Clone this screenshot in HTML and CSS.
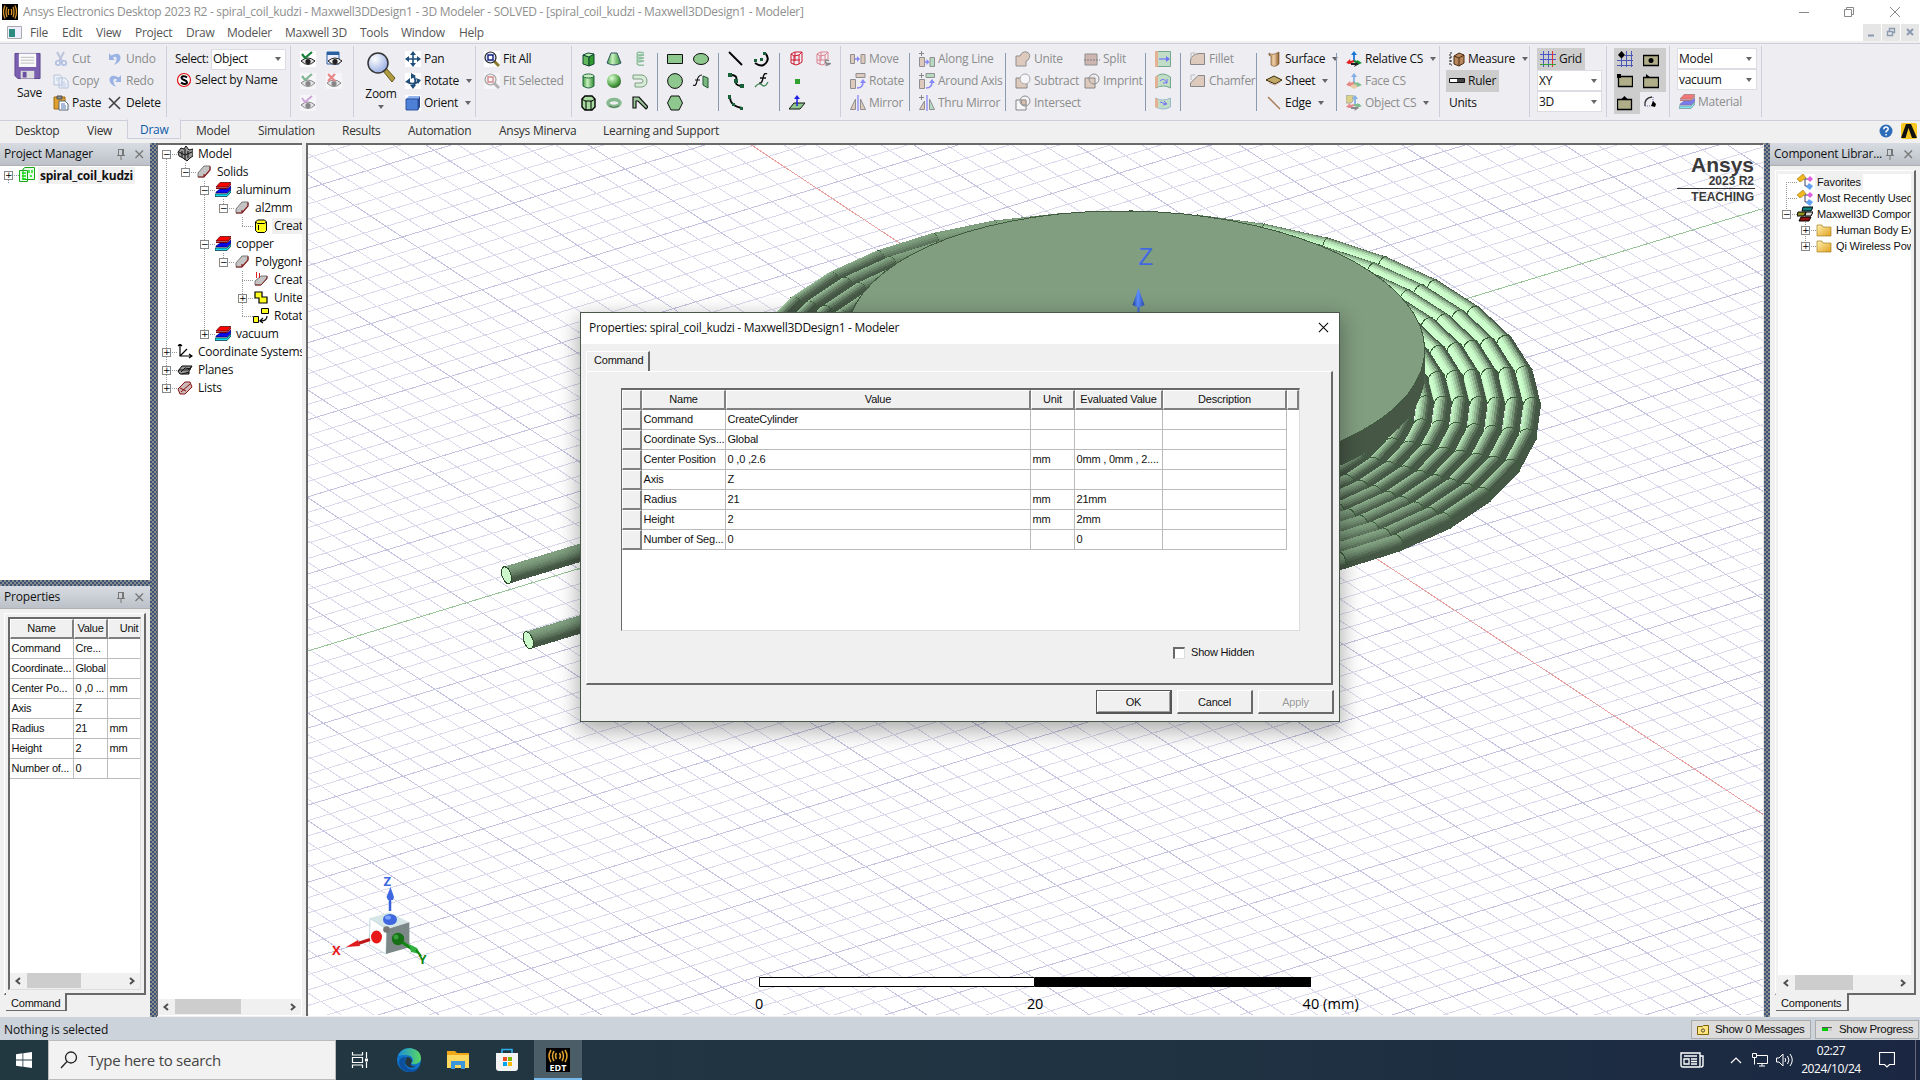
FILE: index.html
```html
<!DOCTYPE html>
<html lang="en">
<head>
<meta charset="utf-8">
<title>Ansys Electronics Desktop 2023 R2</title>
<link rel="stylesheet" href="styles.css">
</head>
<body>
<svg class="defs" width="0" height="0">
<defs>
<linearGradient id="gg" x1="0" x2="1"><stop offset="0" stop-color="#3c9c3c"/><stop offset=".4" stop-color="#c8f0c0"/><stop offset="1" stop-color="#2d8a2d"/></linearGradient>
<radialGradient id="gs" cx=".35" cy=".3" r=".8"><stop offset="0" stop-color="#e0ffd8"/><stop offset=".6" stop-color="#5aac50"/><stop offset="1" stop-color="#1c501c"/></radialGradient>
<radialGradient id="glens" cx=".35" cy=".3" r=".8"><stop offset="0" stop-color="#fff"/><stop offset="1" stop-color="#8fa6e0"/></radialGradient>
<linearGradient id="fold" x1="0" y1="0" x2="1" y2="1"><stop offset="0" stop-color="#fff3b0"/><stop offset="1" stop-color="#e0a020"/></linearGradient>
<linearGradient id="edge1" x1="0" x2="1"><stop offset="0" stop-color="#1b8fd8"/><stop offset="1" stop-color="#5ad860"/></linearGradient>
<linearGradient id="cone" x1="0" x2="1"><stop offset="0" stop-color="#1e3f9c"/><stop offset=".45" stop-color="#5f90ff"/><stop offset="1" stop-color="#2a4cae"/></linearGradient>
<linearGradient id="sk" x1="0" x2="1"><stop offset="0" stop-color="#b08050"/><stop offset=".5" stop-color="#f0d0a8"/><stop offset="1" stop-color="#906030"/></linearGradient>
</defs>
<symbol id="i-cut" viewBox="0 0 16 16"><path d="M4 1l5 9M11 1L6 10" stroke="#8a9cc4" stroke-width="2" fill="none"/><circle cx="5" cy="12" r="2.2" fill="none" stroke="#6f8fd0" stroke-width="1.6"/><circle cx="11" cy="12" r="2.2" fill="none" stroke="#6f8fd0" stroke-width="1.6"/></symbol>
<symbol id="i-copy" viewBox="0 0 16 16"><path d="M1 2h6l2 2v8H1zM6 5h6l3 3v7H6z" fill="#eef4ff" stroke="#7f9cc8"/><path d="M3 5h3M3 7h2M8 9h4M8 11h5M8 13h5" stroke="#8fb0e0"/></symbol>
<symbol id="i-paste" viewBox="0 0 16 16"><path d="M1 2h11v12H1z" fill="#e0a030" stroke="#a06c10"/><path d="M4 1h5v3H4z" fill="#888" stroke="#555"/><path d="M6 6h6l3 3v6H6z" fill="#fff" stroke="#567"/><path d="M8 9h4M8 11h5M8 13h5" stroke="#5070b0"/></symbol>
<symbol id="i-undo" viewBox="0 0 16 16"><path d="M2 2v7h6L5.800 6.800Q10 4 9.500 8.500 9.500 11 7 14 14 11 13.500 6 12 .5 4.200 4.500z" fill="#4a78d8"/></symbol>
<symbol id="i-redo" viewBox="0 0 16 16"><path d="M14 2v7H8l2.200-2.200Q6 4 6.500 8.500 6.500 11 9 14 2 11 2.500 6 4 .5 11.800 4.500z" fill="#4a78d8"/></symbol>
<symbol id="i-del" viewBox="0 0 16 16"><path d="M2 3l11 11M13 2L2 13" stroke="#444" stroke-width="1.700"/></symbol>
<symbol id="i-save" viewBox="0 0 28 28"><path d="M1 1h26v26H4l-3-3z" fill="#7a5fb0" stroke="#5c4590"/><path d="M5 1h18v14H5z" fill="#fafafa"/><path d="M7 5h14M7 8h14M7 11h14" stroke="#bbb"/><path d="M7 19h14v8H7z" fill="#ddd"/><path d="M9 20h4v6H9z" fill="#6a50a0"/></symbol>
<symbol id="i-s" viewBox="0 0 16 16"><circle cx="8" cy="8" r="6.500" fill="#fff" stroke="#e01010" stroke-width="1.200"/><path d="M11 5.500C9 3.500 5.500 4 5.500 6S11 8 11 10.200 7 12.500 5 10.500" fill="none" stroke="#000" stroke-width="2"/></symbol>
<symbol id="i-eye" viewBox="0 0 16 16"><rect width="16" height="16" fill="#fff"/><path d="M1 10q7-6 14 0-7 7-14 0z" fill="#ddd" stroke="#222"/><circle cx="8" cy="10.500" r="2.600" fill="#222"/><path d="M2 3l3 4 7-6" stroke="#15803a" stroke-width="2.200" fill="none"/></symbol>
<symbol id="i-eyew" viewBox="0 0 16 16"><path d="M1 1h12v12H1z" fill="#eef" stroke="#2860a0"/><path d="M1 1h12v3H1z" fill="#2860a0"/><path d="M2 10q7-6 14 0-7 7-14 0z" fill="#eee" stroke="#222"/><circle cx="9" cy="10.500" r="2.600" fill="#222"/></symbol>
<symbol id="i-eyex" viewBox="0 0 16 16"><rect width="16" height="16" fill="#fff"/><path d="M1 10q7-6 14 0-7 7-14 0z" fill="#ddd" stroke="#222"/><circle cx="8" cy="10.500" r="2.600" fill="#222"/><path d="M2 1l7 7M9 1L2 8" stroke="#e02020" stroke-width="2.200"/></symbol>
<symbol id="i-eyep" viewBox="0 0 16 16"><rect width="16" height="16" fill="#fff"/><path d="M1 10q7-6 14 0-7 7-14 0z" fill="#ddd" stroke="#222"/><circle cx="8" cy="10.500" r="2.600" fill="#222"/><path d="M2 3l3 4 7-6" stroke="#b060c0" stroke-width="2" fill="none"/></symbol>
<symbol id="i-zoom" viewBox="0 0 30 31"><path d="M17 19l3-3 9 10-3 4z" fill="#b09a40" stroke="#665a20"/><circle cx="12" cy="11" r="10" fill="url(#glens)" stroke="#333" stroke-width="1.500"/></symbol>
<symbol id="i-pan" viewBox="0 0 16 16"><rect width="16" height="16" fill="#fff"/><path d="M8 2v12M2 8h12" stroke="#1f4e79" stroke-width="1.600"/><path d="M8 0l3 4H5zM8 16l3-4H5zM0 8l4-3v6zM16 8l-4-3v6z" fill="#1f4e79"/></symbol>
<symbol id="i-rot" viewBox="0 0 16 16"><rect width="16" height="16" fill="#fff"/><path d="M8 3q4 3 1 10M3 9q5 4 11-1" fill="none" stroke="#1f4e79" stroke-width="1.800"/><path d="M6 0l5 3-5 3zM0 9l5-4v6zM16 7l-5-2 2 6zM8 16l-3-4h6z" fill="#1f4e79"/></symbol>
<symbol id="i-cube" viewBox="0 0 16 16"><rect width="16" height="16" fill="#fff"/><path d="M1 4l3-3h11l-2 3z" fill="#8fb4f0"/><path d="M13 4l2-3v11l-2 3z" fill="#23488c"/><path d="M1 4h12v11H1z" fill="#4f80d8" stroke="#2a4c98"/></symbol>
<symbol id="i-fit" viewBox="0 0 16 16"><rect width="16" height="16" fill="#fff"/><path d="M10 10l5 5" stroke="#8a7a30" stroke-width="3"/><circle cx="6.500" cy="6.500" r="5.500" fill="#e0e6fa" stroke="#222" stroke-width="1.200"/><path d="M4 4h5v5H4z" fill="#fff" stroke="#102080" stroke-width="1.400"/></symbol>
<symbol id="i-fits" viewBox="0 0 16 16"><rect width="16" height="16" fill="#fff"/><path d="M10 10l5 5" stroke="#777" stroke-width="3"/><circle cx="6.500" cy="6.500" r="5.500" fill="#eee" stroke="#555" stroke-width="1.200"/><path d="M4 4h5v5H4z" fill="#fff" stroke="#c03030" stroke-width="1.400"/></symbol>
<symbol id="i-box" viewBox="0 0 16 16"><path d="M2 4v9l6 2V6z" fill="#63b85c" stroke="#143"/><path d="M8 6v9l5-2V3z" fill="#2f9a2f" stroke="#143"/><path d="M2 4l5-2 6 1-5 3z" fill="#b8eeb0" stroke="#143"/></symbol>
<symbol id="i-frus" viewBox="0 0 16 16"><path d="M5 2h6l4 10q-7 4-14 0z" fill="url(#gg)" stroke="#356"/></symbol>
<symbol id="i-helix" viewBox="0 0 16 16"><path d="M12 2q-7-2-7 1t7 1q-7-1-7 2t7 1q-7-1-7 2t7 1q-7-1-7 2t7 2" fill="none" stroke="#8fc0a0" stroke-width="1.500"/></symbol>
<symbol id="i-cyl" viewBox="0 0 16 16"><path d="M2 3v10q6 4 11 0V3" fill="url(#gg)" stroke="#264"/><ellipse cx="7.500" cy="3" rx="5.500" ry="2" fill="#c8eec0" stroke="#264"/></symbol>
<symbol id="i-sph" viewBox="0 0 16 16"><circle cx="8" cy="8" r="7" fill="url(#gs)"/></symbol>
<symbol id="i-spiral" viewBox="0 0 16 16"><path d="M1 2h9q5 1 5 6t-5 6H3v-4h6q2 0 2-2T9 6H1z" fill="#d8ead8" stroke="#7aa080"/></symbol>
<symbol id="i-prism" viewBox="0 0 16 16"><path d="M1 4l3-3h7l3 3v8l-3 3H4l-3-3z" fill="#a8dca0" stroke="#000" stroke-width="1.400"/><path d="M1 4l3 2h7l3-2M5 6v9M10 6v9" stroke="#000" fill="none"/></symbol>
<symbol id="i-torus" viewBox="0 0 16 16"><ellipse cx="8" cy="8" rx="6" ry="3.500" fill="none" stroke="#88b890" stroke-width="3.500"/><path d="M3 11q5 3 10 0" stroke="#4a7a50" fill="none"/></symbol>
<symbol id="i-bend" viewBox="0 0 16 16"><path d="M1 13V2h6l9 10-2 2-8-8H4v7z" fill="#9cc89c" stroke="#111" stroke-width="1.200"/></symbol>
<symbol id="i-rect" viewBox="0 0 16 16"><path d="M.500 3.500h15v9H.500z" fill="#8fc88f" stroke="#111"/></symbol>
<symbol id="i-ell" viewBox="0 0 16 16"><ellipse cx="8" cy="8" rx="7.500" ry="5.500" fill="#8fc88f" stroke="#111"/></symbol>
<symbol id="i-circ" viewBox="0 0 16 16"><circle cx="8" cy="8" r="7.400" fill="#8fc88f" stroke="#111"/></symbol>
<symbol id="i-hex" viewBox="0 0 16 16"><path d="M4 1h8l3.500 7-3.500 7H4L.500 8z" fill="#8fc88f" stroke="#111"/></symbol>
<symbol id="i-fsurf" viewBox="0 0 16 16"><path d="M10 3l5 2v10l-5-3z" fill="#7ab880" stroke="#253"/><path d="M0 12q3 2 4-4t5-6M2 7h5" fill="none" stroke="#111" stroke-width="1.200"/></symbol>
<symbol id="i-line" viewBox="0 0 16 16"><path d="M1 1l13 13" stroke="#000" stroke-width="1.800"/></symbol>
<symbol id="i-arc" viewBox="0 0 16 16"><path d="M11 2q5 5 1 10t-11 0" fill="none" stroke="#000" stroke-width="2"/><path d="M9 1h3v3H9zM6 7h3v3H6zM0 8h3v3H0z" fill="#186038"/></symbol>
<symbol id="i-spl" viewBox="0 0 16 16"><path d="M2 2q8 0 6 5t5 6" fill="none" stroke="#000" stroke-width="1.800"/><path d="M0 0h4v4H0zM6 6h4v4H6zM12 11h4v4h-4z" fill="#186038"/></symbol>
<symbol id="i-feq" viewBox="0 0 16 16"><path d="M5 10q3 1 4-5t4-4M6 5h6" fill="none" stroke="#111" stroke-width="1.500"/><path d="M1 14q4-5 7-2t6-3" fill="none" stroke="#408858" stroke-width="1.300"/></symbol>
<symbol id="i-arc3" viewBox="0 0 16 16"><path d="M2 2q0 9 12 11" fill="none" stroke="#000" stroke-width="1.800"/><path d="M0 0h3v4H0zM4 8h3v3H4zM12 12h3v3h-3z" fill="#186038"/></symbol>
<symbol id="i-rbox" viewBox="0 0 16 16"><path d="M2 3l4-2h7l-3 3v9l-3 1-5-2zM10 4L5 5 2 3M5 5v9M13 1v10l-3 2M2 9h9M6 1v9" fill="none" stroke="#d01830"/></symbol>
<symbol id="i-rboxs" viewBox="0 0 16 16"><path d="M2 3l4-2h7l-3 3v9l-3 1-5-2zM10 4L5 5 2 3M5 5v9M13 1v7M2 9h8M6 1v9" fill="none" stroke="#d01830"/><path d="M14 9.500Q10.500 8 10.500 10.500T14 12.500 10.500 14.500" fill="none" stroke="#222" stroke-width="1.500"/></symbol>
<symbol id="i-pt" viewBox="0 0 16 16"><path d="M6 6h5v5H6z" fill="#30a030"/></symbol>
<symbol id="i-plane" viewBox="0 0 16 16"><path d="M0 14l5-6h11l-5 6z" fill="#8fc88f" stroke="#111"/><path d="M8 11V3" stroke="#2020e0" stroke-width="1.500"/><path d="M8 0l3 4H5z" fill="#2020e0"/></symbol>
<symbol id="i-move" viewBox="0 0 16 16"><path d="M.500 3.500h4v9h-4zM11 3.500h4v9h-4z" fill="#d0a888" stroke="#333"/><path d="M5 8h3" stroke="#22f" stroke-width="1.500"/><path d="M7 5l3 3-3 3z" fill="#22f"/></symbol>
<symbol id="i-mrot" viewBox="0 0 16 16"><path d="M.500 6.500h5v9h-5zM6 .500h9v4H6z" fill="#d0a888" stroke="#333"/><path d="M7 15q6 0 6-6" stroke="#22f" fill="none" stroke-width="1.500"/><path d="M10 10l3-4 3 4z" fill="#22f"/></symbol>
<symbol id="i-mir" viewBox="0 0 16 16"><path d="M5.500 4v10.500h-5zM10.500 4v10.500h5z" fill="#d0a888" stroke="#333"/><path d="M8 0v16" stroke="#22f" stroke-width="1.300"/></symbol>
<symbol id="i-dmove" viewBox="0 0 16 16"><path d="M.500 6.500h5v9h-5z" fill="#d0a888" stroke="#333"/><path d="M11 6.500h4.500v9H11z" fill="#80c890" stroke="#333"/><path d="M6 11h3" stroke="#22f" stroke-width="1.500"/><path d="M7.500 8l3 3-3 3z" fill="#22f"/><path d="M0 2.500h5M2.500 0v5" stroke="#222"/></symbol>
<symbol id="i-drot" viewBox="0 0 16 16"><path d="M.500 6.500h5v9h-5z" fill="#d0a888" stroke="#333"/><path d="M7 .500h8.500v4H7z" fill="#80c890" stroke="#333"/><path d="M7 15q6 0 6-6" stroke="#22f" fill="none" stroke-width="1.500"/><path d="M10 10l3-4 3 4z" fill="#22f"/><path d="M0 2.500h5M2.500 0v5" stroke="#222"/></symbol>
<symbol id="i-dmir" viewBox="0 0 16 16"><path d="M5.500 6v8.500h-5z" fill="#d0a888" stroke="#333"/><path d="M10.500 4v10.500h5z" fill="#80c890" stroke="#333"/><path d="M8 0v16" stroke="#22f" stroke-width="1.300"/><path d="M0 2.500h5M2.500 0v5" stroke="#222"/></symbol>
<symbol id="i-uni" viewBox="0 0 16 16"><path d="M1 5h4q2-5 7-4 5 3 1 8l-2 1v5H1z" fill="#d0a888" stroke="#333"/></symbol>
<symbol id="i-sub" viewBox="0 0 16 16"><path d="M1 5h11v10H1z" fill="#d0a888" stroke="#222"/><circle cx="10" cy="6" r="5" fill="#fff" stroke="#666"/></symbol>
<symbol id="i-int" viewBox="0 0 16 16"><path d="M1 5h10v10H1z" fill="#fff" stroke="#222"/><circle cx="10" cy="6" r="5" fill="#fff" fill-opacity=".5" stroke="#333"/><path d="M6 5h5v5H7z" fill="#d09060" stroke="#333"/></symbol>
<symbol id="i-split" viewBox="0 0 16 16"><path d="M1 3h12v11H1z" fill="#b08070" stroke="#333"/><path d="M0 9h16" stroke="#111" stroke-dasharray="2 1"/></symbol>
<symbol id="i-imp" viewBox="0 0 16 16"><path d="M1 5h10v10H1z" fill="#d0a888" stroke="#222"/><circle cx="10" cy="6" r="5" fill="none" stroke="#333"/></symbol>
<symbol id="i-sw1" viewBox="0 0 16 16"><path d="M.500.500h15v15H.500z" fill="#a4d2a8" stroke="#207a50"/><path d="M0 0h3v16H0z" fill="#e08a58"/><path d="M4 8h8" stroke="#22f" stroke-width="1.200"/><path d="M11 5l4 3-4 3z" fill="#22f"/></symbol>
<symbol id="i-sw2" viewBox="0 0 16 16"><path d="M.500 4q7-6 15 0v11q-7-4-15 0z" fill="#a4d2a8" stroke="#207a50"/><path d="M0 4l3-2v12l-3 1z" fill="#e08a58"/><path d="M5 8q4-4 7 2M12 6v4H8" stroke="#22f" fill="none"/></symbol>
<symbol id="i-sw3" viewBox="0 0 16 16"><path d="M.500 3q7 4 15 0v9q-7 4-15 0z" fill="#a4d2a8" stroke="#6098c0"/><path d="M0 3l3 1v9l-3-1z" fill="#e08a58"/><path d="M5 7l6 2M9 6l3 3-4 1" stroke="#22f" fill="none"/></symbol>
<symbol id="i-fil" viewBox="0 0 16 16"><path d="M.500 13.500V9Q2 3 9 2.500h5.500v11z" fill="#d0a888" stroke="#222"/><path d="M1 2h4M1 2v5" stroke="#888"/></symbol>
<symbol id="i-cha" viewBox="0 0 16 16"><path d="M.500 13.500V10L8 2.500h6.500v11z" fill="#d0a888" stroke="#222"/><path d="M1 2h4M1 2v5" stroke="#888"/></symbol>
<symbol id="i-surf" viewBox="0 0 16 16"><path d="M3 2q3 3 10-1v12q-4 4-8 1V5q-3 0-2-3z" fill="url(#sk)" stroke="#704820" stroke-width=".6"/></symbol>
<symbol id="i-sheet" viewBox="0 0 16 16"><path d="M0 7l8-4 8 4-7 4z" fill="#c0a868" stroke="#3a2800"/><path d="M3 10l6 2 5-3" stroke="#caa" fill="none"/></symbol>
<symbol id="i-edg" viewBox="0 0 16 16"><path d="M2 2l12 12" stroke="#a87850" stroke-width="1.300"/></symbol>
<symbol id="i-cs" viewBox="0 0 16 16"><path d="M8 2v8" stroke="#1874d8" stroke-width="1.800"/><path d="M8 0l3 4H5z" fill="#1874d8"/><path d="M8 10l-6 2" stroke="#e02020" stroke-width="2"/><path d="M0 12l4-4 1 5z" fill="#e02020"/><path d="M8 10l6 2" stroke="#109030" stroke-width="2"/><path d="M16 12l-5-3v5z" fill="#109030"/><path d="M5 12h5l-2-2 5 3-5 3 1-2H5z" fill="#222"/></symbol>
<symbol id="i-fcs" viewBox="0 0 16 16"><path d="M1 12l6-4 8 4-7 4z" fill="#e8a860"/><path d="M8 2v8" stroke="#1874d8" stroke-width="1.800"/><path d="M8 0l3 4H5z" fill="#1874d8"/><path d="M8 10l-6 2" stroke="#e02020" stroke-width="2"/><path d="M0 12l4-4 1 5z" fill="#e02020"/><path d="M8 10l6 2" stroke="#109030" stroke-width="2"/><path d="M16 12l-5-3v5z" fill="#109030"/></symbol>
<symbol id="i-ocs" viewBox="0 0 16 16"><path d="M0 1l3-1h4v6L5 8H0z" fill="#c8b820" stroke="#665"/><path d="M9 2v8" stroke="#1874d8" stroke-width="1.800"/><path d="M9 0l3 4H6z" fill="#1874d8"/><path d="M8 10l-6 2" stroke="#e02020" stroke-width="2"/><path d="M0 12l4-4 1 5z" fill="#e02020"/><path d="M8 10l6 0" stroke="#109030" stroke-width="2"/><path d="M16 11l-5-3v5z" fill="#109030"/><path d="M5 12h5l-2-2 5 3-5 3 1-2H5z" fill="#222"/></symbol>
<symbol id="i-meas" viewBox="0 0 16 16"><path d="M3 2H1v12h2M1 6h2M1 10h2" stroke="#222" fill="none" stroke-dasharray="2 1"/><path d="M5 5l5-3 5 2v8l-5 3-5-2z" fill="#b8865c" stroke="#4a2c10"/><path d="M5 5l5 2 5-3M10 7v8" stroke="#4a2c10" fill="none"/></symbol>
<symbol id="i-rul" viewBox="0 0 16 16"><path d="M.500 5.500h15v4H.500z" fill="#fff" stroke="#111"/><path d="M8 6h7v3H8z" fill="#444"/></symbol>
<symbol id="i-grid" viewBox="0 0 16 16"><path d="M3.500 0v16M8.500 0v16M0 3.500h16M0 8.500h16" stroke="#4a58c8"/><path d="M12.500 0v16" stroke="#e03030"/><path d="M0 13.500h16" stroke="#30a030"/></symbol>
<symbol id="i-sng" viewBox="0 0 16 16"><path d="M4.500 6v10M9.500 0v16M14.500 0v16M0 9.500h16M0 14.500h16M8 4.500h8" stroke="#4a58b8"/><path d="M4.500 0L8 4 4.500 7.500 1 4z"/></symbol>
<symbol id="i-sn1" viewBox="0 0 16 16"><path d="M.500 4.500h15v10H.500z" fill="#b0ae88" stroke="#000" stroke-width="1.300"/><circle cx="8" cy="9.500" r="2.500"/></symbol>
<symbol id="i-sn2" viewBox="0 0 16 16"><path d="M1.500 3.500h14v10h-14z" fill="#b0ae88" stroke="#000" stroke-width="1.300"/><path d="M0 1h4v4H0z"/></symbol>
<symbol id="i-sn3" viewBox="0 0 16 16"><path d="M.500 4.500h15v10H.500z" fill="#b0ae88" stroke="#000" stroke-width="1.300"/><path d="M3 1l5 4H3z"/></symbol>
<symbol id="i-sn4" viewBox="0 0 16 16"><path d="M.500 4.500h14v10H.500z" fill="#b0ae88" stroke="#000" stroke-width="1.300"/><path d="M7.500 1l4 4h-8z"/></symbol>
<symbol id="i-sn5" viewBox="0 0 16 16"><path d="M2 11Q1 3 9 2" stroke="#333" fill="none" stroke-width="1.400"/><path d="M2 11h6M10 2v6" stroke="#66a" stroke-dasharray="1 1"/><path d="M10 6l3 3-1 3-4-1z"/></symbol>
<symbol id="i-tmat" viewBox="0 0 16 16"><path d="M1 5l4-4.500h11L12 5z" fill="#f00" stroke="#400" stroke-width=".7"/><path d="M12 5.500L16 1v2l-4 4H1V5.500z" fill="#900"/><path d="M1 10l4-3h7l4-3v3l-4 4H1z" fill="#0808f0" stroke="#004" stroke-width=".6"/><path d="M0 12h12l4-4v2l-4 4.500H0z" fill="#10e0f0" stroke="#023" stroke-width=".7"/></symbol>
<symbol id="i-proj" viewBox="0 0 16 16"><path d="M4 2L6 .500h9.500v12H4zM.500 3.500h8v11h-8z" fill="#eaffea" stroke="#18a818"/><path d="M3 6h4M3 9h4M3 12h4M13 3v3M10 3v3M11 9h2" stroke="#10e010" stroke-width="1.400"/></symbol>
<symbol id="i-model" viewBox="0 0 16 16"><path d="M1 6l3-4 3 1 2-3 3 4 4-1v7l-3 2-3 3-4-3-4-2z" fill="#999" stroke="#111"/><path d="M5 5v6M8 3v11M11 5v7M2 6l6 3 7-3" stroke="#111" fill="none"/></symbol>
<symbol id="i-solid" viewBox="0 0 16 16"><path d="M2 13V9l6-7h6v4l-6 7z" fill="#c4c4c4" stroke="#777"/><path d="M2 13h6l6-7V2.500M8 13l0-3" stroke="#8a2020" fill="none" stroke-width="1.200"/></symbol>
<symbol id="i-solr" viewBox="0 0 16 16"><path d="M2 13V9l6-5h6v3l-6 6z" fill="#c4c4c4" stroke="#777"/><path d="M2 13h6l6-7V4" stroke="#8a2020" fill="none"/><path d="M3.500 6V0M6.500 6V1" stroke="#e02020" fill="none"/></symbol>
<symbol id="i-ycyl" viewBox="0 0 16 16"><path d="M2.500 4l2-2h7l2 2v8.500l-2 2h-7l-2-2z" fill="#ffff20" stroke="#000"/><path d="M2.500 4l2 1.500h7l2-1.500M5.500 7v5" stroke="#000" fill="none"/></symbol>
<symbol id="i-yuni" viewBox="0 0 16 16"><path d="M2 2h7v5h5v6H6V8H2z" fill="#ffff20" stroke="#000" stroke-width="1.200"/></symbol>
<symbol id="i-yrot" viewBox="0 0 16 16"><path d="M8.500.500h7v5h-7zM.500 8.500h5v6h-5z" fill="#ffff20" stroke="#000"/><path d="M14 8q0 5-6 5M10 10l-3 3 3 2" stroke="#000" fill="none" stroke-width="1.200"/></symbol>
<symbol id="i-coord" viewBox="0 0 16 16"><path d="M3 0v12h12M3 12l7-7M1 2l2-2 2 2M12 10l3 2-3 2" stroke="#000" fill="none" stroke-width="1.200"/></symbol>
<symbol id="i-planes" viewBox="0 0 16 16"><path d="M1 9l4-5h10l-3 5v3H3z" fill="#999" stroke="#000"/><path d="M4 10l4-4 6 1M2 8h9l3-3M5 12l7-2" stroke="#111" fill="none"/></symbol>
<symbol id="i-lists" viewBox="0 0 16 16"><path d="M1 9l7-7h5l2 5-7 7H3z" fill="#ccb8b8" stroke="#8a1010"/><path d="M4 12l9-8M3 8l6 3" stroke="#8a1010" fill="none"/></symbol>
<symbol id="i-fav" viewBox="0 0 16 16"><path d="M0 5l6-5 3 4-6 4z" fill="#f0b820" stroke="#a07010" stroke-width=".6"/><path d="M8 5h3M8 5v7h3" stroke="#446" fill="none"/><path d="M13 2l3 3-3 3-3-3z" fill="#e060e0"/><path d="M12 9l4 3-3 4-4-3z" fill="#60a0f0"/></symbol>
<symbol id="i-mx" viewBox="0 0 16 16"><path d="M6 1h10l-2 4H5z" fill="#108080" stroke="#000"/><path d="M1 6h8l-2 4H0z" fill="#909020" stroke="#000"/><path d="M9 6h7l-2 4H8z" fill="#d8d8d8" stroke="#000"/><path d="M4 11h10l-2 4H2z" fill="#901010" stroke="#000"/></symbol>
<symbol id="i-fold" viewBox="0 0 16 16"><path d="M1 3h5l1 2h8v9H1z" fill="url(#fold)" stroke="#a08020" stroke-width=".7"/></symbol>
<symbol id="i-pin" viewBox="0 0 16 16"><path d="M5 3.500h6M5.500 3v6M10.500 3v6M9.500 3v6M4 9.500h8M8 10v4" stroke="#777" fill="none"/></symbol>
<symbol id="i-x" viewBox="0 0 16 16"><path d="M4.500 4.500l7.500 7.500M12 4.500L4.500 12" stroke="#777" stroke-width="1.300"/></symbol>
<symbol id="i-coil" viewBox="0 0 24 24"><rect width="24" height="24" fill="#000"/><g fill="none" stroke="#e0a030" stroke-width="1.500"><path d="M5 2q-4 6 0 12M8 3q-3 5 0 10M10.500 5q-2 3 0 6M19 2q4 6 0 12M16 3q3 5 0 10M13.500 5q2 3 0 6"/></g></symbol>
<symbol id="i-coil16" viewBox="0 0 16 16"><rect width="16" height="16" fill="#000"/><g fill="none" stroke="#d8952a" stroke-width="1.300"><path d="M3 1.500q-3 6.500 0 13M5 3q-2 5 0 10M6.800 5q-1 3 0 6M13 1.500q3 6.500 0 13M11 3q2 5 0 10M9.200 5q1 3 0 6"/></g></symbol>
</svg>

<header class="titlebar">
  <svg class="ic"><use href="#i-coil16"/></svg><span class="title">Ansys Electronics Desktop 2023 R2 - spiral_coil_kudzi - Maxwell3DDesign1 - 3D Modeler - SOLVED - [spiral_coil_kudzi - Maxwell3DDesign1 - Modeler]</span>
  <svg class="winbtns" viewBox="0 0 120 20"><path d="M2 10.500h10M47.500 7.500h7v7h-7zM49.500 7.500v-2h7v7h-2M93 5l10 10M103 5l-10 10" fill="none" stroke="#888"/></svg>
</header>
<nav class="menubar">
  <svg class="app" viewBox="0 0 15 13"><path d="M.5.500h14v12H.5z" fill="#eef" stroke="#aaa"/><path d="M2 3h6v8H2z" fill="#2e8b80"/></svg>
  <span class="m32">File</span><span class="m34">Edit</span><span class="m39">View</span><span class="m51">Project</span><span class="m41">Draw</span><span class="m58">Modeler</span><span class="m75">Maxwell 3D</span><span class="m41">Tools</span><span class="m58">Window</span><span class="m32">Help</span>
  <div class="mdi"><svg viewBox="0 0 18 17"><path d="M5 11.500h6" stroke="#8a9ab0" stroke-width="2"/></svg><svg viewBox="0 0 18 17"><path d="M7.500 7V4.500h5v4H11M5.500 7.500h5v4h-5z" fill="none" stroke="#8a9ab0" stroke-width="1.400"/></svg><svg viewBox="0 0 18 17"><path d="M6 5l6 6M12 5l-6 6" stroke="#8a9ab0" stroke-width="2"/></svg></div>
</nav>

<section class="ribbon">
  <div class="grp g1">
    <div class="big save"><svg class="bigic"><use href="#i-save"/></svg><span>Save</span></div>
    <div class="col c54"><div class="it off"><svg class="ic"><use href="#i-cut"/></svg>Cut</div><div class="it off"><svg class="ic"><use href="#i-copy"/></svg>Copy</div><div class="it"><svg class="ic"><use href="#i-paste"/></svg>Paste</div></div>
    <div class="col"><div class="it off"><svg class="ic"><use href="#i-undo"/></svg>Undo</div><div class="it off"><svg class="ic"><use href="#i-redo"/></svg>Redo</div><div class="it"><svg class="ic"><use href="#i-del"/></svg>Delete</div></div>
  </div>
  <div class="grp g2">
    <div class="col"><div class="it sel"><span>Select:</span><div class="combo cb75">Object<i></i></div></div><div class="it byname"><svg class="ic"><use href="#i-s"/></svg>Select by Name</div></div>
  </div>
  <div class="grp g3">
    <div class="col c26"><div class="it"><svg class="ic"><use href="#i-eye"/></svg></div><div class="it off"><svg class="ic"><use href="#i-eye"/></svg></div><div class="it off"><svg class="ic"><use href="#i-eyep"/></svg></div></div>
    <div class="col"><div class="it"><svg class="ic"><use href="#i-eyew"/></svg></div><div class="it off"><svg class="ic"><use href="#i-eyex"/></svg></div></div>
  </div>
  <div class="grp g4">
    <div class="big zoom"><svg class="bigic"><use href="#i-zoom"/></svg><span>Zoom</span><i></i></div>
    <div class="col"><div class="it"><svg class="ic"><use href="#i-pan"/></svg>Pan</div><div class="it"><svg class="ic"><use href="#i-rot"/></svg>Rotate<i></i></div><div class="it"><svg class="ic"><use href="#i-cube"/></svg>Orient<i></i></div></div>
  </div>
  <div class="grp g5"><div class="col"><div class="it"><svg class="ic"><use href="#i-fit"/></svg>Fit All</div><div class="it off"><svg class="ic"><use href="#i-fits"/></svg>Fit Selected</div></div></div>
  <div class="grp g6">
    <div class="col c26"><div class="it"><svg class="ic"><use href="#i-box"/></svg></div><div class="it"><svg class="ic"><use href="#i-cyl"/></svg></div><div class="it"><svg class="ic"><use href="#i-prism"/></svg></div></div>
    <div class="col c26"><div class="it"><svg class="ic"><use href="#i-frus"/></svg></div><div class="it"><svg class="ic"><use href="#i-sph"/></svg></div><div class="it"><svg class="ic"><use href="#i-torus"/></svg></div></div>
    <div class="col c25"><div class="it"><svg class="ic"><use href="#i-helix"/></svg></div><div class="it"><svg class="ic"><use href="#i-spiral"/></svg></div><div class="it"><svg class="ic"><use href="#i-bend"/></svg></div></div>
    <b></b>
    <div class="col c26"><div class="it"><svg class="ic"><use href="#i-rect"/></svg></div><div class="it"><svg class="ic"><use href="#i-circ"/></svg></div><div class="it"><svg class="ic"><use href="#i-hex"/></svg></div></div>
    <div class="col c25"><div class="it"><svg class="ic"><use href="#i-ell"/></svg></div><div class="it"><svg class="ic"><use href="#i-fsurf"/></svg></div></div>
    <b></b>
    <div class="col c26"><div class="it"><svg class="ic"><use href="#i-line"/></svg></div><div class="it"><svg class="ic"><use href="#i-spl"/></svg></div><div class="it"><svg class="ic"><use href="#i-arc3"/></svg></div></div>
    <div class="col c25"><div class="it"><svg class="ic"><use href="#i-arc"/></svg></div><div class="it"><svg class="ic"><use href="#i-feq"/></svg></div></div>
    <b></b>
    <div class="col c26"><div class="it"><svg class="ic"><use href="#i-rbox"/></svg></div><div class="it"><svg class="ic"><use href="#i-pt"/></svg></div><div class="it"><svg class="ic"><use href="#i-plane"/></svg></div></div>
    <div class="col"><div class="it off"><svg class="ic"><use href="#i-rboxs"/></svg></div></div>
  </div>
  <div class="grp g7">
    <div class="col c59"><div class="it off"><svg class="ic"><use href="#i-move"/></svg>Move</div><div class="it off"><svg class="ic"><use href="#i-mrot"/></svg>Rotate</div><div class="it off"><svg class="ic"><use href="#i-mir"/></svg>Mirror</div></div>
    <b></b>
    <div class="col c86"><div class="it off"><svg class="ic"><use href="#i-dmove"/></svg>Along Line</div><div class="it off"><svg class="ic"><use href="#i-drot"/></svg>Around Axis</div><div class="it off"><svg class="ic"><use href="#i-dmir"/></svg>Thru Mirror</div></div>
    <b></b>
    <div class="col c70"><div class="it off"><svg class="ic"><use href="#i-uni"/></svg>Unite</div><div class="it off"><svg class="ic"><use href="#i-sub"/></svg>Subtract</div><div class="it off"><svg class="ic"><use href="#i-int"/></svg>Intersect</div></div>
    <div class="col c62"><div class="it off"><svg class="ic"><use href="#i-split"/></svg>Split</div><div class="it off"><svg class="ic"><use href="#i-imp"/></svg>Imprint</div></div>
    <b></b>
    <div class="col c25"><div class="it off2"><svg class="ic"><use href="#i-sw1"/></svg></div><div class="it off2"><svg class="ic"><use href="#i-sw2"/></svg></div><div class="it off2"><svg class="ic"><use href="#i-sw3"/></svg></div></div>
    <b></b>
    <div class="col c67"><div class="it off"><svg class="ic"><use href="#i-fil"/></svg>Fillet</div><div class="it off"><svg class="ic"><use href="#i-cha"/></svg>Chamfer</div></div>
    <b></b>
    <div class="col c71"><div class="it"><svg class="ic"><use href="#i-surf"/></svg>Surface<i></i></div><div class="it"><svg class="ic"><use href="#i-sheet"/></svg>Sheet<i></i></div><div class="it"><svg class="ic"><use href="#i-edg"/></svg>Edge<i></i></div></div>
    <b></b>
    <div class="col"><div class="it"><svg class="ic"><use href="#i-cs"/></svg>Relative CS<i></i></div><div class="it off"><svg class="ic"><use href="#i-fcs"/></svg>Face CS</div><div class="it off"><svg class="ic"><use href="#i-ocs"/></svg>Object CS<i></i></div></div>
  </div>
  <div class="grp g8"><div class="col"><div class="it"><svg class="ic"><use href="#i-meas"/></svg>Measure<i></i></div><div class="it on"><svg class="ic"><use href="#i-rul"/></svg>Ruler</div><div class="it">Units</div></div></div>
  <div class="grp g9"><div class="col"><div class="it on"><svg class="ic"><use href="#i-grid"/></svg>Grid</div><div class="combo cb65">XY<i></i></div><div class="combo cb65">3D<i></i></div></div></div>
  <div class="grp g10"><div class="col"><div class="it snap"><svg class="ic"><use href="#i-sng"/></svg><svg class="ic"><use href="#i-sn1"/></svg></div><div class="it snap"><svg class="ic"><use href="#i-sn2"/></svg><svg class="ic"><use href="#i-sn3"/></svg></div><div class="it snap half"><svg class="ic"><use href="#i-sn4"/></svg><svg class="ic"><use href="#i-sn5"/></svg></div></div></div>
  <div class="grp g11"><div class="col"><div class="combo cb80">Model<i></i></div><div class="combo cb80">vacuum<i></i></div><div class="it off mat"><svg class="ic"><use href="#i-tmat"/></svg>Material</div></div></div>
</section>
<nav class="tabs">
  <span class="t72">Desktop</span><span class="t39">View</span><span class="active">Draw</span><span class="t62">Model</span><span class="t84">Simulation</span><span class="t66">Results</span><span class="t91">Automation</span><span class="t104">Ansys Minerva</span><span>Learning and Support</span>
  <div class="tabicons"><svg viewBox="0 0 16 16"><circle cx="8" cy="8" r="6.500" fill="#2e6db8"/><path d="M5.800 6.300q.2-2.200 2.200-2.200t2.200 1.900q0 1.200-2.100 2.500v1M8.100 11v1.600" stroke="#fff" stroke-width="1.500" fill="none"/></svg><svg viewBox="0 0 16 16"><rect width="16" height="16" rx="2" fill="#f8c820"/><path d="M0 15L5 1h5l6 14h-5L7.500 5 4.500 15z" fill="#111"/></svg></div>
</nav>

<main class="work">
  <aside class="dock left">
    <div class="phead"><span>Project Manager</span><svg class="ic"><use href="#i-pin"/></svg><svg class="ic"><use href="#i-x"/></svg></div>
    <div class="ptree">
      <div class="tr"><u class="c b last first"><em>+</em></u><svg class="ic"><use href="#i-proj"/></svg><span class="lb hl bold">spiral_coil_kudzi</span></div>
    </div>
    <div class="hsplit"></div>
    <div class="phead"><span>Properties</span><svg class="ic"><use href="#i-pin"/></svg><svg class="ic"><use href="#i-x"/></svg></div>
    <div class="pbox">
      <div class="sunk">
        <div class="ptab">
          <div class="hd">Name</div><div class="hd">Value</div><div class="hd unit">Unit</div>
          <div>Command</div><div>Cre...</div><div></div>
          <div>Coordinate...</div><div>Global</div><div></div>
          <div>Center Po...</div><div>0 ,0 ...</div><div>mm</div>
          <div>Axis</div><div>Z</div><div></div>
          <div>Radius</div><div>21</div><div>mm</div>
          <div>Height</div><div>2</div><div>mm</div>
          <div>Number of...</div><div>0</div><div></div>
        </div>
        <div class="sbar"><svg viewBox="0 0 16 16"><path d="M10 5L6.500 8l3.500 3" fill="none" stroke="#505050" stroke-width="2"/></svg><div class="thumb th54"></div><svg viewBox="0 0 16 16"><path d="M6 5l3.500 3L6 11" fill="none" stroke="#505050" stroke-width="2"/></svg></div>
      </div>
    </div>
    <div class="btab">Command</div>
  </aside>
  <div class="vsplit"></div>
  <aside class="mtree">
    <div class="tr"><u class="c b first"><em>−</em></u><svg class="ic"><use href="#i-model"/></svg><span class="lb">Model</span></div>
    <div class="tr"><u class="c v"></u><u class="c b last"><em>−</em></u><svg class="ic"><use href="#i-solid"/></svg><span class="lb">Solids</span></div>
    <div class="tr"><u class="c v"></u><u class="c"></u><u class="c b"><em>−</em></u><svg class="ic"><use href="#i-tmat"/></svg><span class="lb">aluminum</span></div>
    <div class="tr"><u class="c v"></u><u class="c"></u><u class="c v"></u><u class="c b last"><em>−</em></u><svg class="ic"><use href="#i-solid"/></svg><span class="lb">al2mm</span></div>
    <div class="tr"><u class="c v"></u><u class="c"></u><u class="c v"></u><u class="c"></u><u class="c b last"></u><svg class="ic"><use href="#i-ycyl"/></svg><span class="lb hl">CreateCylinder</span></div>
    <div class="tr"><u class="c v"></u><u class="c"></u><u class="c b"><em>−</em></u><svg class="ic"><use href="#i-tmat"/></svg><span class="lb">copper</span></div>
    <div class="tr"><u class="c v"></u><u class="c"></u><u class="c v"></u><u class="c b last"><em>−</em></u><svg class="ic"><use href="#i-solid"/></svg><span class="lb">PolygonHelix1</span></div>
    <div class="tr"><u class="c v"></u><u class="c"></u><u class="c v"></u><u class="c"></u><u class="c b"></u><svg class="ic"><use href="#i-solr"/></svg><span class="lb">CreatePolygonHelix</span></div>
    <div class="tr"><u class="c v"></u><u class="c"></u><u class="c v"></u><u class="c"></u><u class="c b"><em>+</em></u><svg class="ic"><use href="#i-yuni"/></svg><span class="lb">Unite</span></div>
    <div class="tr"><u class="c v"></u><u class="c"></u><u class="c v"></u><u class="c"></u><u class="c b last"></u><svg class="ic"><use href="#i-yrot"/></svg><span class="lb">Rotate</span></div>
    <div class="tr"><u class="c v"></u><u class="c"></u><u class="c b last"><em>+</em></u><svg class="ic"><use href="#i-tmat"/></svg><span class="lb">vacuum</span></div>
    <div class="tr"><u class="c b"><em>+</em></u><svg class="ic"><use href="#i-coord"/></svg><span class="lb">Coordinate Systems</span></div>
    <div class="tr"><u class="c b"><em>+</em></u><svg class="ic"><use href="#i-planes"/></svg><span class="lb">Planes</span></div>
    <div class="tr"><u class="c b last"><em>+</em></u><svg class="ic"><use href="#i-lists"/></svg><span class="lb">Lists</span></div>
    <div class="sbar"><svg viewBox="0 0 16 16"><path d="M10 5L6.500 8l3.500 3" fill="none" stroke="#505050" stroke-width="2"/></svg><div class="thumb th66"></div><svg viewBox="0 0 16 16"><path d="M6 5l3.500 3L6 11" fill="none" stroke="#505050" stroke-width="2"/></svg></div>
  </aside>
  <div class="gap"></div>
  <section class="view">
    <svg width="1455" height="870" viewBox="308 145 1455 870">
      <g id="grid" fill="none" shape-rendering="crispEdges"></g>
      <g id="coil" shape-rendering="crispEdges"></g>
      <g fill="#4169e1">
        <text x="1138.500" y="265" class="zlab">Z</text>
        <path d="M1137.500 306h2v10h-2z"/><path d="M1138.500 288l6 17q-6 4-12 0z" fill="url(#cone)"/>
      </g>
      <g class="triad">
        <path d="M370 918.300l19.300-6 20 10-22.700 7z" fill="#d6e6e6"/><path d="M370 918.300l16.700 11-.7 24.700-16.600-9z" fill="#fff" stroke="#c2dae0"/><path d="M386.700 929.300l22.700-7v25l-23.400 6.700z" fill="#7c8787"/>
        <circle cx="386.500" cy="929.500" r="3.300" fill="#777"/>
        <path d="M390 911v-14" stroke="#3a62d8" stroke-width="2.500"/><path d="M390.500 887l3.500 10-1 3h-5l-1.500-3z" fill="#3f68e0"/>
        <ellipse cx="390" cy="919.500" rx="7" ry="5.500" fill="#3f68e0"/><ellipse cx="388" cy="917.500" rx="3" ry="2" fill="#7da4ff"/>
        <path d="M370 939.500l-12 4" stroke="#c01818" stroke-width="3"/><path d="M346 947l12-7 2 6z" fill="#e01c1c"/>
        <ellipse cx="376.500" cy="937" rx="5.500" ry="6.500" fill="#e81818"/>
        <path d="M402 942l10 7" stroke="#118811" stroke-width="3"/><path d="M409 944l8 4 3 6-9-2z" fill="#30b040"/><path d="M416 950l5 6" stroke="#118811" stroke-width="2"/>
        <circle cx="398" cy="939" r="6.200" fill="#167016"/><circle cx="396" cy="937" r="2.500" fill="#38a038"/>
        <text x="383.500" y="886" fill="#3f68e0">Z</text><text x="332" y="955" fill="#e81818">X</text><text x="418.500" y="963.500" fill="#118811">Y</text>
      </g>
      <g><path d="M759.500 977.500h275v9h-275z" fill="#fff" stroke="#000"/><path d="M1035 977h276v10h-276z"/></g>
      <g class="scale"><text x="759" y="1008.500" text-anchor="middle">0</text><text x="1035" y="1008.500" text-anchor="middle">20</text><text x="1302.500" y="1008.500" textLength="56">40 (mm)</text></g>
      <g class="brand" text-anchor="end"><text x="1754" y="171.500" class="b1">Ansys</text><text x="1754" y="185" class="b2">2023 R2</text><path d="M1677 188.500h78" stroke="#333"/><text x="1754" y="201" class="b2">TEACHING</text></g>
    </svg>
  </section>
  <div class="vsplit r"></div>
  <aside class="dock right">
    <div class="phead"><span>Component Librar...</span><svg class="ic"><use href="#i-pin"/></svg><svg class="ic"><use href="#i-x"/></svg></div>
    <div class="pbox">
      <div class="ctree">
        <div class="tr"><u class="c b first"></u><svg class="ic"><use href="#i-fav"/></svg><span class="lb hl">Favorites</span></div>
        <div class="tr"><u class="c b"></u><svg class="ic"><use href="#i-fav"/></svg><span class="lb">Most Recently Used</span></div>
        <div class="tr"><u class="c b last"><em>−</em></u><svg class="ic"><use href="#i-mx"/></svg><span class="lb">Maxwell3D Components</span></div>
        <div class="tr"><u class="c"></u><u class="c b"><em>+</em></u><svg class="ic"><use href="#i-fold"/></svg><span class="lb">Human Body Exposure</span></div>
        <div class="tr"><u class="c"></u><u class="c b last"><em>+</em></u><svg class="ic"><use href="#i-fold"/></svg><span class="lb">Qi Wireless Power</span></div>
        <div class="sbar"><svg viewBox="0 0 16 16"><path d="M10 5L6.500 8l3.500 3" fill="none" stroke="#505050" stroke-width="2"/></svg><div class="thumb th58"></div><svg viewBox="0 0 16 16"><path d="M6 5l3.500 3L6 11" fill="none" stroke="#505050" stroke-width="2"/></svg></div>
      </div>
    </div>
    <div class="btab">Components</div>
  </aside>
</main>

<footer class="status"><span>Nothing is selected</span>
  <div class="sbtn s120"><svg viewBox="0 0 12 10"><path d="M.500 1.500h5l1-1h5v9H.500z" fill="#ffe680" stroke="#806000"/><circle cx="6" cy="5.500" r="1.600" fill="none" stroke="#543"/></svg>Show 0 Messages</div>
  <div class="sbtn s104"><svg viewBox="0 0 12 10"><path d="M1 3h10v3H1z" fill="#ccc"/><path d="M1 3h6v3H1z" fill="#0c0"/><path d="M1 2.500h10" stroke="#555"/></svg>Show Progress</div>
</footer>
<footer class="taskbar">
  <div class="start"><svg viewBox="0 0 16 16"><path d="M0 2.300l6.500-1v6.300H0zM7.300 1.200L16 0v7.600H7.300zM0 8.400h6.500v6.300l-6.500-1zM7.300 8.400H16V16l-8.700-1.200z" fill="#fff"/></svg></div>
  <div class="search"><svg viewBox="0 0 18 18"><circle cx="11" cy="6.500" r="5.500" fill="none" stroke="#222" stroke-width="1.300"/><path d="M7 10.500L1 17" stroke="#222" stroke-width="1.300"/></svg>Type here to search</div>
  <div class="tb first"><svg viewBox="0 0 24 24"><path d="M4.500 4v3h10V4M4.500 20v-3h10v3M4.500 9.500h10v5h-10zM18.500 4v6M18.500 14v6" fill="none" stroke="#fff" stroke-width="1.200"/><path d="M17 10.500h3v3h-3z" fill="#fff"/></svg></div>
  <div class="tb"><svg viewBox="0 0 24 24"><circle cx="12" cy="12" r="12" fill="#1173c8"/><path d="M1 8Q5-1 14 .3 24 2 24 11q-1 6-9 5-1-1 1-3 0-6-7-6-5 0-8 1z" fill="url(#edge1)"/><path d="M9 9q-4 8 3 12 6 2 10-2-3 6-10 5Q2 22 2 14q1-5 7-5z" fill="#0c4f9c"/><path d="M15 13q-1-4-5-4-4 5 0 9 4 3 9 0-6 1-5-3z" fill="#223740"/></svg></div>
  <div class="tb"><svg viewBox="0 0 24 24"><path d="M1 3h8l2 2h12v15H1z" fill="#f0a818"/><path d="M1 7h22v13H1z" fill="#ffd860"/><path d="M5 21v-8h14v8h-4v-4H9v4z" fill="#3c96dc"/></svg></div>
  <div class="tb"><svg viewBox="0 0 24 24"><path d="M7 6V1.500h10V6" fill="none" stroke="#30b0f0" stroke-width="1.600"/><path d="M1 5h22v15q0 3-3 3H4q-3 0-3-3z" fill="#f4f4f4"/><path d="M8 9h4v4H8z" fill="#f04e23"/><path d="M13 9h4v4h-4z" fill="#7fba00"/><path d="M8 14h4v4H8z" fill="#00a4ef"/><path d="M13 14h4v4h-4z" fill="#ffb900"/></svg></div>
  <div class="tb act"><svg viewBox="0 0 24 24"><use href="#i-coil"/><text x="12" y="23" class="edt" text-anchor="middle">EDT</text></svg></div>
  <div class="tray">
    <svg class="news" viewBox="0 0 24 16"><path d="M1 1h19v14H3q-2 0-2-2zM20 4h3v9q0 2-2 2" fill="none" stroke="#fff" stroke-width="1.400"/><path d="M4 4h13M11 7h6M11 9.500h6M11 12h6M4 7h5v5H4z" stroke="#fff" fill="none" stroke-width="1.300"/></svg>
    <svg class="chev" viewBox="0 0 12 8"><path d="M1 7l5-5 5 5" fill="none" stroke="#fff" stroke-width="1.200"/></svg>
    <svg class="net" viewBox="0 0 16 14"><path d="M5 2.500h10.500v8H5M7 13h6M10 10.500V13M.500.500h4v4h-4zM2.500 4.500v7" fill="none" stroke="#fff"/></svg>
    <svg class="spk" viewBox="0 0 18 14"><path d="M.500 5h2.500l4-4v12l-4-4H.500zM9 5q1.500 2 0 4M11.500 3q3 4 0 8M14 1q4.500 6 0 12" fill="none" stroke="#fff"/></svg>
    <div class="clock"><span>02:27</span><span>2024/10/24</span></div>
    <svg class="note" viewBox="0 0 16 16"><path d="M.500.500h15v12h-5L8 15l-2.500-2.500h-5z" fill="none" stroke="#fff" stroke-width="1.200"/></svg>
    <div class="peek"></div>
  </div>
</footer>

<div class="dialog">
  <div class="dtitle"><span>Properties: spiral_coil_kudzi - Maxwell3DDesign1 - Modeler</span><svg viewBox="0 0 12 12"><path d="M1 1l10 10M11 1L1 11" stroke="#000" stroke-width="1.100"/></svg></div>
  <div class="dtab">Command</div>
  <div class="dpage">
    <div class="dtable">
      <div class="dg">
        <div class="hd"></div><div class="hd">Name</div><div class="hd">Value</div><div class="hd">Unit</div><div class="hd">Evaluated Value</div><div class="hd">Description</div><div class="hd"></div>
        <div class="hd"></div><div>Command</div><div>CreateCylinder</div><div></div><div></div><div></div><p></p>
        <div class="hd"></div><div>Coordinate Sys...</div><div>Global</div><div></div><div></div><div></div><p></p>
        <div class="hd"></div><div>Center Position</div><div>0 ,0 ,2.6</div><div>mm</div><div>0mm , 0mm , 2....</div><div></div><p></p>
        <div class="hd"></div><div>Axis</div><div>Z</div><div></div><div></div><div></div><p></p>
        <div class="hd"></div><div>Radius</div><div>21</div><div>mm</div><div>21mm</div><div></div><p></p>
        <div class="hd"></div><div>Height</div><div>2</div><div>mm</div><div>2mm</div><div></div><p></p>
        <div class="hd"></div><div>Number of Seg...</div><div>0</div><div></div><div>0</div><div></div><p></p>
      </div>
    </div>
    <div class="chk"><i></i>Show Hidden</div>
  </div>
  <div class="dbtns"><div class="btn def">OK</div><div class="btn">Cancel</div><div class="btn dis">Apply</div></div>
</div>
<script src="scene.js"></script>
</body>
</html>
```
FILE: styles.css
```css
*{box-sizing:border-box}
body{margin:0;width:1920px;height:1080px;overflow:hidden;position:relative;display:flex;flex-direction:column;background:#f0f0f0;font:12px/16px "Open Sans","Noto Sans",sans-serif;letter-spacing:-.27px;color:#111;white-space:nowrap}
.defs{position:absolute}
svg{display:block;flex:none}
.ic{width:16px;height:16px}
.titlebar{height:24px;background:#fff;display:flex;align-items:center;padding:0 0 0 2px;color:#8f8f8f}
.title{margin-left:5px;letter-spacing:-.28px}
.winbtns{width:120px;height:20px;margin:0 3px 0 auto}
.menubar{height:17px;background:#fff;display:flex;align-items:center;padding-left:7px;color:#555}
.app{width:15px;height:13px;margin-right:8px}
.m32{width:32px}.m34{width:34px}.m39{width:39px}.m51{width:51px}.m41{width:41px}.m58{width:58px}.m75{width:75px}
.mdi{display:flex;gap:1px;margin-left:auto;margin-right:1px}
.mdi svg{width:18px;height:17px;background:#e6e6e6}
.ribbon{height:80px;margin:0;background:#eeeef2;border-bottom:1px solid #cccedb;box-shadow:inset 0 2px #f0f0f0,inset 0 3px #cccedb;display:flex;padding:5px 0 4px}
.grp{display:flex;border-right:1px solid #cccedb;padding-top:2px;height:71px}
.grp>b{width:1px;height:58px;margin:5px 9px 0 0;background:#8a9ab0}
.col{display:flex;flex-direction:column}
.it{height:22px;display:flex;align-items:center;gap:3px}
.it.off{color:#8c8c8c}.it.off svg{opacity:.5}.it.off2 svg{opacity:.6}
.it i,.combo i,.zoom i{border:3px solid transparent;border-top:4px solid #666;border-bottom:0;margin-left:4px}
.g1{width:167px;padding-left:14px}.g2{width:124px;padding-left:8px}.g3{width:63px;padding-left:9px}.g4{width:122px;padding-left:12px}.g5{width:96px;padding-left:8px}.g6{width:269px;padding-left:8px}.g7{width:599px;padding-left:9px}.g8{width:90px;padding-left:6px}.g9{width:77px;padding-left:7px}.g10{width:63px;padding-left:7px}.g11{width:92px;padding-left:7px}
.g6 .c26:first-child{padding-left:1px}
.c54{width:54px}.c26{width:26px}.c25{width:25px}.c59{width:59px}.c86{width:86px}.c70{width:69px}.c62{width:61px}.c67{width:66px}.c71{width:70px}
.big{display:flex;flex-direction:column;align-items:center;width:39px;padding-top:4px;margin-right:0}
.save{align-items:flex-start}
.save .bigic{width:27px;height:28px;margin-bottom:5px}.save span{margin-left:3px}
.zoom{align-items:center;width:30px;margin-right:9px}
.zoom .bigic{width:30px;height:31px;margin-bottom:3px}.zoom i{margin:3px 0 0}
.sel span{width:33px;letter-spacing:-.4px}
.combo{display:flex;align-items:center;justify-content:space-between;height:21px;background:#fff;border:1px solid #dcdce4;padding:0 4px 0 1px;font-size:12px}
.cb75{width:75px}.cb65{width:65px}.cb80{width:80px}
.byname{padding-left:1px;margin-top:-1px}
.g8 .it{padding-left:3px}
.on{background:#cdcdcd}
.g8 .on{width:53px}.g9 .on{width:48px;padding-left:3px}
.snap{background:#cdcdcd;width:52px;padding-left:3px;gap:10px}
.half{background:linear-gradient(90deg,#cdcdcd 26px,transparent 26px)}
.mat{padding-left:2px;margin-top:1px}
.tabs{height:22px;display:flex;padding-left:15px;align-items:center;color:#333;line-height:16px;padding-bottom:3px}
.t72{width:72px}.t39{width:40px}.t62{width:62px}.t84{width:84px}.t66{width:66px}.t91{width:91px}.t104{width:104px}
.tabs .active{width:54px;height:20px;margin:-3px 15px 0 0;padding-left:12px;background:#eeeef2;border:1px solid #cccedb;border-top-color:#eeeef2;color:#0e5ba8;line-height:20px}
.tabicons{display:flex;gap:7px;margin-left:auto;margin-right:3px}
.tabicons svg{width:16px;height:16px}

.work{height:874px;display:flex}
.dock{width:150px;display:flex;flex-direction:column;background:#f0f0f0}
.phead{height:23px;flex:none;background:linear-gradient(#d8dce2,#bcc1c9);display:flex;align-items:center;padding:0 3px 0 4px;border-bottom:1px solid #b0b0b0;letter-spacing:-.2px}
.phead span{margin-right:auto}.phead .ic+.ic{margin-left:2px}
.right .phead{padding-right:7px}
.ptree{height:414px;background:#fff;overflow:hidden}
.hsplit{height:6px;background:repeating-conic-gradient(#3c5276 0 25%,#8c8e8e 0 50%) 0 0/4px 4px}
.vsplit{width:7px;flex:none;background:repeating-conic-gradient(#3c5276 0 25%,#8c8e8e 0 50%) 0 0/4px 4px}
.vsplit.r{width:6px}
.gap{width:4px}
.mtree{width:145px;border:1px solid #696969;border-width:2px 0 0 1px;background:#fff;overflow:hidden;display:flex;flex-direction:column;height:873px;padding-right:1px}
.tr{display:flex;height:18px;flex:none;align-items:center}
.c{width:19px;height:100%;flex:none;position:relative;display:block;text-decoration:none}
.v{background:linear-gradient(#999 50%,transparent 50%) 8px 0/1px 2px repeat-y}
.b{background:linear-gradient(#999 50%,transparent 50%) 8px 0/1px 2px repeat-y,linear-gradient(90deg,#999 50%,transparent 50%) 8px 50%/2px 1px repeat-x}
.b::before{content:"";position:absolute;left:0;top:0;width:8px;height:100%;background:#fff}
.b.last::after{content:"";position:absolute;left:8px;bottom:0;width:2px;height:8px;background:#fff}
.b.first::after{content:"";position:absolute;left:8px;top:0;width:2px;height:8px;background:#fff}
.c em{position:absolute;z-index:1;left:4px;top:5px;width:9px;height:9px;border:1px solid #888;background:#fff;font:9px/7px "DejaVu Sans",sans-serif;text-align:center;letter-spacing:0;color:#000}
.lb{margin-left:3px;padding:0 2px;line-height:17px}
.mtree .lb{line-height:16px;margin-bottom:1px}
.hl{background:#f0f0f0}.bold{font-weight:700;letter-spacing:-.23px}
.mtree .sbar{margin-top:auto;margin-bottom:1px}
.sbar{height:16px;flex:none;background:#f0f0f0;display:flex}
.sbar svg{width:16px;height:16px}.sbar svg:last-child{margin-left:auto}
.thumb{height:15px;background:#cdcdcd;margin-left:1px}.th54{width:54px}.th66{width:66px}.th58{width:58px}
.view{width:1458px;background:#fff;border:1px solid #696969;border-width:2px 1px 0 2px;border-right-color:#e8e8e8;overflow:hidden;height:873px}
.zlab{font:24px "Liberation Sans",sans-serif}
.triad text{font:bold 13px "Open Sans",sans-serif}
.scale{font:14.500px "Open Sans",sans-serif}
.brand{fill:#3a3a3a;letter-spacing:0}.b1{font:bold 21px "Liberation Sans",sans-serif}.b2{font:bold 12px "Liberation Sans",sans-serif}
.pbox{flex:1;margin:4px 4px 0 4px;border:1px solid #fff;border-right:2px solid #696969;border-bottom:2px solid #696969;padding:3px}
.sunk{height:100%;border:1px solid #696969;border-width:2px 1px 1px 2px;border-right-color:#ddd;border-bottom-color:#ddd;background:#fff;display:flex;flex-direction:column;overflow:hidden;font:11px/19px "Liberation Sans",sans-serif;letter-spacing:-.25px}
.ptab{display:grid;grid-template-columns:64px 34px 33px;grid-auto-rows:20px}
.ptab div,.dg div{border-right:1px solid #bbb;border-bottom:1px solid #bbb;padding-left:1.500px;overflow:hidden}
.ptab div:nth-child(3n){border-right:0}
.ptab .hd,.dg .hd{background:#f0f0f0;text-align:center;border:1px solid #fff;border-right:2px solid #808080;border-bottom:2px solid #808080;padding:0;line-height:17px}
.ptab .unit{padding-left:8px}
.sunk .sbar{margin-top:auto}
.btab{height:18px;width:61px;margin:-2px 0 6px 6px;padding-left:5px;background:#f0f0f0;border-right:2px solid #696969;border-bottom:1px solid #696969;font:11px/20px "Liberation Sans",sans-serif;letter-spacing:-.2px;position:relative}
.right .btab{width:73px}
.right .pbox{margin-left:5px;padding:3px 2px 2px}
.right .ctree{height:100%;background:#fff;margin-right:1px;overflow:hidden;display:flex;flex-direction:column;font:11px/15px "Liberation Sans",sans-serif;letter-spacing:-.15px}
.right .tr{height:16px}.right .lb{line-height:16px;margin-left:2px}.right .c em{top:4px}
.right .sbar{margin-top:auto}

.status{height:23px;background:#ccd3db;display:flex;align-items:center;padding:2px 1px 0 4px;gap:4px;letter-spacing:-.1px}
.status span{margin-right:auto}
.sbtn{height:19px;border:1px solid #aaa;background:#dcdcdc;display:flex;align-items:center;gap:6px;padding-left:5px;font:11.500px/17px "Liberation Sans",sans-serif;letter-spacing:-.3px}
.sbtn svg{width:12px;height:10px}.s120{width:120px}.s104{width:104px}
.taskbar{height:40px;display:flex;background:linear-gradient(90deg,#223840,#1f3342 60%,#1b2742)}
.start{width:48px;display:flex;align-items:center;justify-content:center}.start svg{width:16px;height:16px}
.search{width:288px;background:#f2f2f2;border:1px solid #bbb;display:flex;align-items:center;gap:10px;padding-left:11px;font-size:15px;letter-spacing:-.27px;color:#444}
.search svg{width:18px;height:18px}
.tb{width:49px;display:flex;align-items:center;justify-content:center}.tb svg{width:24px;height:24px}
.tb.first{width:48px}
.act{width:48px;margin-left:3px;background:#4b5d66;border-bottom:2px solid #76b9ed;padding-top:2px}
.edt{font:bold 9px "Open Sans",sans-serif;fill:#fff;letter-spacing:0}
.tray{margin-left:auto;display:flex;align-items:center;color:#fff}
.news{width:24px;height:16px;margin-right:26px}.chev{width:12px;height:8px;margin-right:10px}.net{width:16px;height:14px;margin-right:8px}.spk{width:18px;height:14px;margin-right:7px}
.clock{width:60px;display:flex;flex-direction:column;align-items:center;line-height:18px;margin-right:18px;letter-spacing:-.4px}
.note{width:16px;height:16px;margin-right:20px}.peek{width:5px;height:40px;border-left:1px solid #667}

.dialog{position:absolute;left:580px;top:312px;width:760px;height:410px;background:#f0f0f0;border:1px solid #4c574c;box-shadow:0 7px 20px 2px rgba(0,0,0,.32);display:flex;flex-direction:column;font:11px/19px "Liberation Sans",sans-serif;letter-spacing:-.2px}
.dtitle{height:31px;background:#fff;display:flex;align-items:center;padding:0 10px 2px 8px;font:12px "Open Sans",sans-serif;letter-spacing:-.3px}
.dtitle svg{width:11px;height:11px;margin-left:auto}
.dtab{margin:7px 0 0 5px;width:64px;height:20px;border:1px solid #fff;border-right:2px solid #696969;border-bottom:0;padding-left:7px;line-height:16px}
.dpage{height:314px;margin:0 6px 0 5px;border:1px solid #fff;border-right:2px solid #696969;border-bottom:2px solid #696969;padding:16px 31px 0 34px}
.dtable{height:243px;background:#fff;border:1px solid #696969;border-width:2px 1px 1px 1px;border-right-color:#ddd;border-bottom-color:#ddd}
.dg{display:grid;grid-template-columns:20px 84px 305px 44px 88px 124px 12px;grid-auto-rows:20px}
.dg p{margin:0}
.chk{display:flex;align-items:center;gap:6px;padding:12px 0 0 552px}
.chk i{width:12px;height:12px;background:#fff;border:1px solid #ddd;border-top:2px solid #696969;border-left:2px solid #696969}
.dbtns{display:flex;justify-content:flex-end;gap:5px;padding:5px 5px 0 0}
.btn{width:76px;height:24px;text-align:center;line-height:22px;border:1px solid #fff;border-right:2px solid #696969;border-bottom:2px solid #696969}
.def{border:1px solid #555;border-right:2px solid #555;border-bottom:2px solid #555;box-shadow:inset 1px 1px #fff,inset -1px -1px #a0a0a0}
.dis{color:#999;text-shadow:1px 1px #fff}
```
FILE: scene.js
```js
(function () {
// Axonometric view: millimetres on the XY plane to page pixels.
const O = [1135.7, 399.3], A = [11.15, -3.39], B = [7.98, 5.28], H = 12.2;
const V = [-0.514, 0.718, 0.454], L = [-0.92, 0, 0.39];
const P = (p, q, z) => [O[0] + A[0] * p + B[0] * q, O[1] + A[1] * p + B[1] * q - H * z];
const f = a => a.map(v => v[0].toFixed(1) + ' ' + v[1].toFixed(1)).join('L');
const dot = (a, b) => a[0] * b[0] + a[1] * b[1] + a[2] * b[2];
const shade = n => {
  const i = Math.min(1, 0.34 + 0.74 * Math.max(0, dot(n, L)));
  return `rgb(${Math.round(204 * i)},${Math.round(255 * i)},${Math.round(204 * i)})`;
};

// Ground grid: 2 mm lines, 10 mm major lines, coloured axes.
let minor = '', major = '', axes = '';
for (let k = -90; k <= 90; k++) {
  const u = `M${f([P(-200, k * 2, 0), P(200, k * 2, 0)])}`;
  const v = `M${f([P(k * 2, -200, 0), P(k * 2, 200, 0)])}`;
  if (k === 0) axes = `<path d="${u}" stroke="#98c498"/><path d="${v}" stroke="#e8a0a0"/>`;
  else if (k % 5) minor += u + v;
  else major += u + v;
}
document.getElementById('grid').innerHTML =
  `<path d="${minor}" stroke="#dadaec"/><path d="${major}" stroke="#c4c4e0"/>${axes}`;

// Round wire between two centres; sa and sb are the horizontal normals.
const R = 0.64, N = 24;
function tube(a, b, sa, sb) {
  let s = '';
  for (let i = 0; i < N; i++) {
    const t0 = i * 2 * Math.PI / N, t1 = (i + 1.15) * 2 * Math.PI / N, tm = (t0 + t1) / 2;
    const n = [Math.cos(tm) * sa[0], Math.cos(tm) * sa[1], Math.sin(tm)];
    if (dot(n, V) < -0.08) continue;
    const q = (c, w, t) => P(c[0] + R * Math.cos(t) * w[0], c[1] + R * Math.cos(t) * w[1], R * Math.sin(t));
    s += `<path d="M${f([q(a, sa, t0), q(b, sb, t0), q(b, sb, t1), q(a, sa, t1)])}z" fill="${shade(n)}"/>`;
  }
  return s;
}
function ring(c, w) {
  const pts = [];
  for (let i = 0; i <= N * 2; i++) {
    const t = i * Math.PI / N - 1.2;
    const n = [Math.cos(t) * w[0], Math.cos(t) * w[1], Math.sin(t)];
    if (dot(n, V) > 0) pts.push([i, P(c[0] + R * n[0], c[1] + R * n[1], R * n[2])]);
  }
  let d = '', last = -9;
  for (const [i, p] of pts) { d += (i === last + 1 ? 'L' : 'M') + f([p]); last = i; }
  return `<path d="${d}" fill="none" stroke="#3c5c3c"/>`;
}
const at = deg => {
  const t = deg * Math.PI / 180, r = 28.93 + 1.3 * deg / 360;
  const w = [0.813 * Math.cos(t) - 0.582 * Math.sin(t), 0.582 * Math.cos(t) + 0.813 * Math.sin(t)];
  return { c: [r * w[0], r * w[1]], w };
};
const segs = [];
for (let d = -3251; d < 110; d += 10) {
  const a = at(d), b = at(d + 10);
  const key = (a.c[0] + b.c[0]) * V[0] + (a.c[1] + b.c[1]) * V[1];
  segs.push([key, tube(a.c, b.c, a.w, b.w) + ring(a.c, a.w)]);
}
segs.sort((x, y) => x[0] - y[0]);
let out = segs.map(s => s[1]).join('');

// The two straight terminals.
for (const [p, q] of [[-55, -2], [-59.7, 7.3]]) {
  out += tube([p, q], [-42, q], [0, 1], [0, 1]);
  const cap = [];
  for (let i = 0; i < 20; i++) cap.push(P(p, q + R * Math.cos(i * Math.PI / 10), R * Math.sin(i * Math.PI / 10)));
  out += `<path d="M${f(cap)}z" fill="#ccf8cc" stroke="#2c4c2c"/>`;
}

// Aluminium plate, 21 mm radius, from z = 2.6 to 4.6.
const disc = z => {
  const a = [];
  for (let i = 0; i < 72; i++) a.push(P(21.08 * Math.cos(i * Math.PI / 36), 21.08 * Math.sin(i * Math.PI / 36), z));
  return a;
};
const upper = disc(4.6), lower = disc(2.6);
out += `<path d="M${f(lower)}z" fill="#465745"/>`;
for (let i = 0; i < 72; i++) {
  const j = (i + 1) % 72;
  out += `<path d="M${f([upper[i], upper[j], lower[j], lower[i]])}z" fill="#465745"/>`;
}
out += `<path d="M${f(upper)}z" fill="#819e81" stroke="#3f5a3f"/>`;
document.getElementById('coil').innerHTML = out;
})();
```
